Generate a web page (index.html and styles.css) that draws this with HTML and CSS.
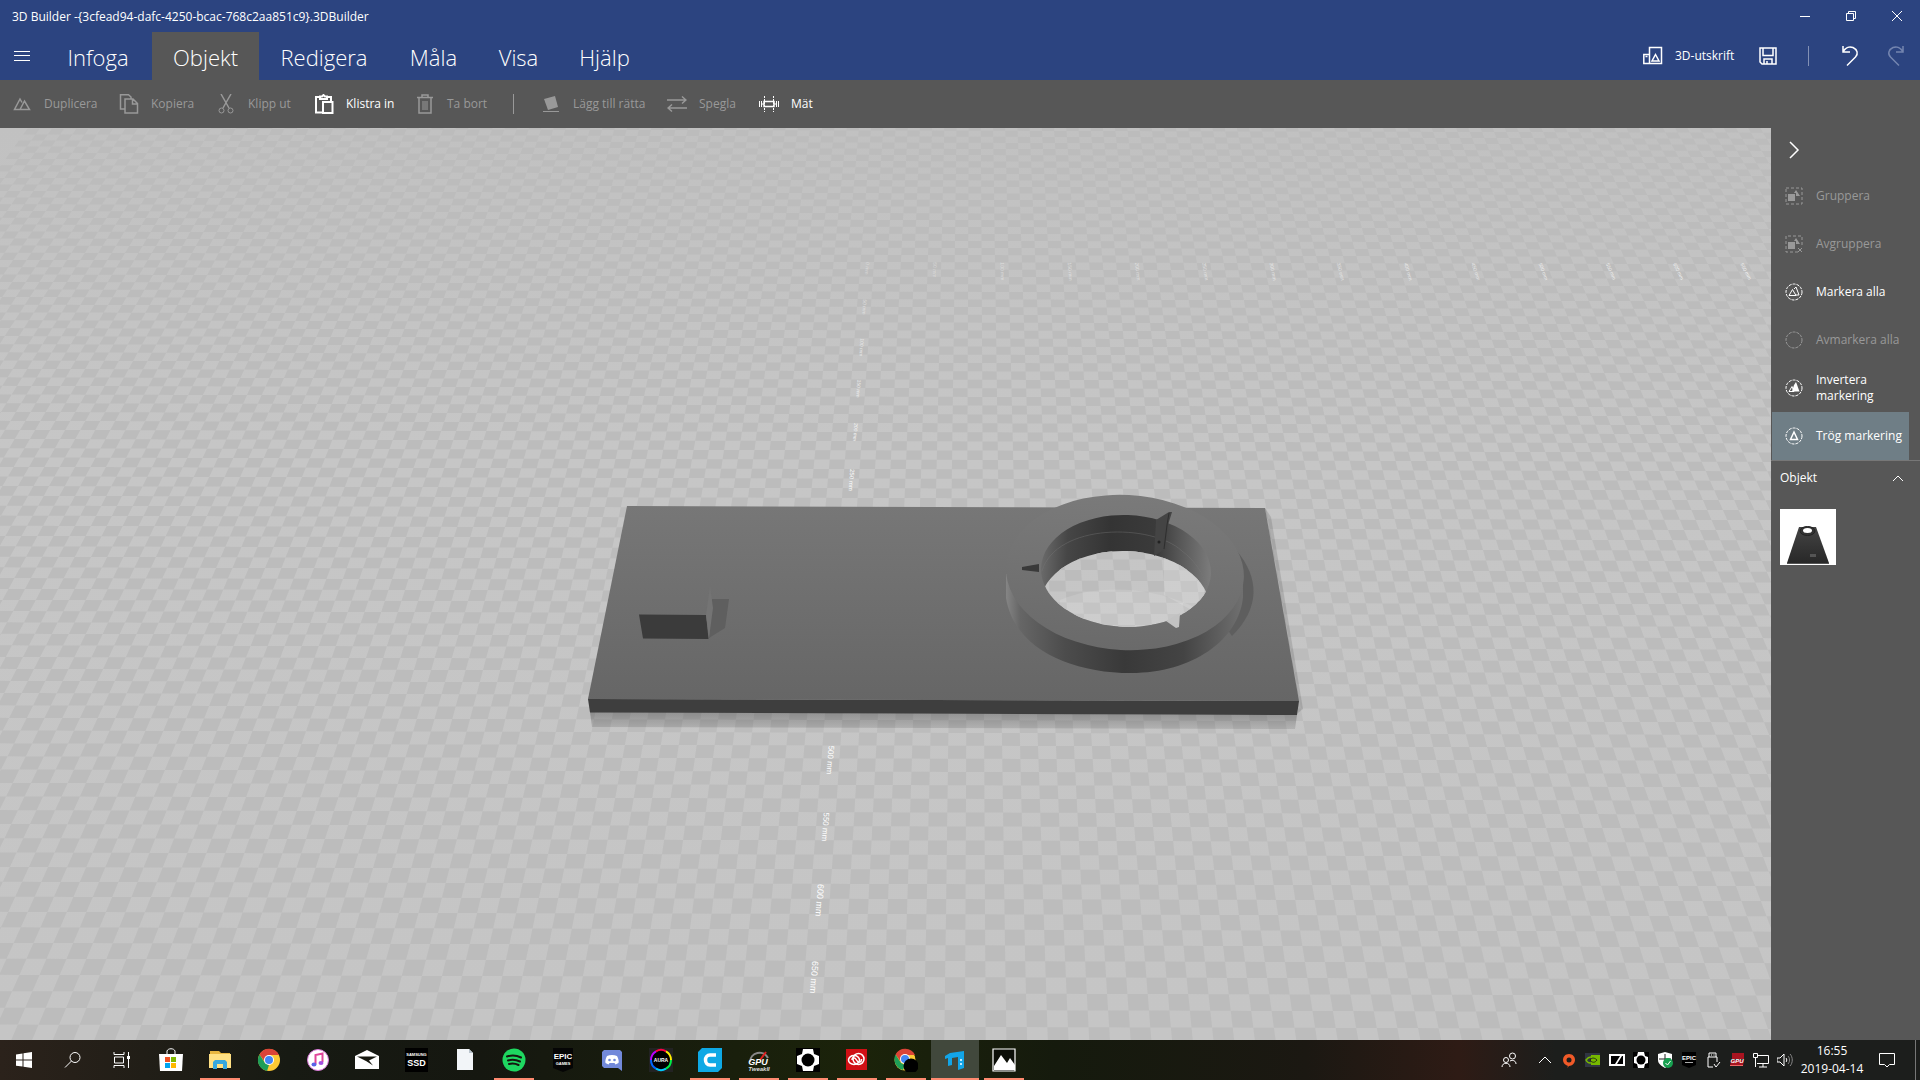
FILE: index.html
```html
<!DOCTYPE html>
<html lang="sv">
<head>
<meta charset="utf-8">
<title>3D Builder</title>
<link rel="stylesheet" href="styles.css">
</head>
<body>
<header class="titlebar">
  <span class="title">3D Builder -{3cfead94-dafc-4250-bcac-768c2aa851c9}.3DBuilder</span>
  <div class="window-controls">
    <button aria-label="Minimera"><svg width="10" height="10"><path d="M0 5.500h10"/></svg></button>
    <button aria-label="Återställ"><svg width="10" height="10"><path d="M.5 2.500h7v7h-7zM2.500 2.500v-2h7v7h-2"/></svg></button>
    <button aria-label="Stäng"><svg width="10" height="10"><path d="M0 0l10 10M10 0L0 10"/></svg></button>
  </div>
</header>

<nav class="menubar">
  <button class="burger" aria-label="Meny"><svg width="16" height="12"><path d="M0 1.500h16M0 5.500h16M0 10.500h16"/></svg></button>
  <div class="tabs">
    <button>Infoga</button>
    <button class="active">Objekt</button>
    <button>Redigera</button>
    <button>Måla</button>
    <button>Visa</button>
    <button>Hjälp</button>
  </div>
  <div class="quick">
    <button class="print"><svg width="20" height="20"><path class="mid" d="M6.500 1.500h12v16h-12zM6 8.500H.8v9H6M2.500 10.500h2" /><path class="mid" d="M12.500 8.500l3.500 6.500H9z"/></svg>3D-utskrift</button>
    <button aria-label="Spara"><svg width="20" height="20"><path class="mid" d="M2 2h16v16H4l-2-2zM5 2v7.500h10V2M6 18v-5h8v5M9 15v3"/></svg></button>
    <span class="rule"></span>
    <button aria-label="Ångra"><svg width="20" height="22"><path class="mid" d="M3 1v6h7M3 7C5 3 9 1 13 2.500c4.500 2 5.500 6.500 2.500 9.500L7 20.500"/></svg></button>
    <button aria-label="Gör om" disabled><svg width="20" height="22"><path class="mid" d="M17 1v6h-7M17 7C15 3 11 1 7 2.500c-4.500 2-5.500 6.500-2.500 9.500l8.500 8.500"/></svg></button>
  </div>
</nav>

<div class="toolbar" role="toolbar">
  <button disabled><svg width="20" height="20"><path class="mid" d="M8 15.500H2.500L8 5l2 3.500M8 15.500L12.500 7l5 8.500z"/></svg>Duplicera</button>
  <button disabled><svg width="20" height="20"><path class="mid" d="M6 15H1.500V.8h8L12 3v2M6 5h8l4.500 4.500V19H6zM13.500 5v5h5"/></svg>Kopiera</button>
  <button disabled><svg width="20" height="20"><path d="M5 0l8 14M15 0L7 14" class="mid"/><circle cx="5.500" cy="16.500" r="2.500"/><circle cx="14.500" cy="16.500" r="2.500"/></svg>Klipp ut</button>
  <button><svg width="20" height="20"><path class="bold" d="M8 18.500H2V3h3M14 3h3v4M6 5V2.500h2L9.500 1 11 2.500h2V5zM9 8h9.500v11H9z"/></svg>Klistra in</button>
  <button disabled><svg width="20" height="20"><path class="mid" d="M2 3.500h16M7 3V1h6v2M4 4v15h12V4"/><path d="M8 7v9M10 7v9M12 7v9"/></svg>Ta bort</button>
  <span class="rule"></span>
  <button disabled><svg width="20" height="20"><path class="fill" d="M3 5l11-3 3 11-10 3z"/><path d="M2 17.500h16"/></svg>Lägg till rätta</button>
  <button disabled><svg width="20" height="20"><path class="mid" d="M0 6h18M15 2.500L19 6l-4 3.500M20 14H2M5 10.500L1 14l4 3.500"/></svg>Spegla</button>
  <button><svg width="20" height="20"><path class="mid" d="M5 7.500h10v5H5z"/><path d="M5.500 2v16M14.500 2v16" stroke-dasharray="2 1"/><path d="M.5 7v6M2.500 7v6M17.500 7v6M19.500 7v6M2 10h3M15 10h3"/></svg>Mät</button>
</div>

<div class="workspace">
  <main class="stage">
    <svg class="scene" viewBox="0 128 1771 912" preserveAspectRatio="xMidYMid slice" role="img" aria-label="3D-vy">
      <defs>
        <linearGradient id="ground" x1="0" y1="0" x2="0" y2="1"><stop offset="0" stop-color="#c1c1c1"/><stop offset=".35" stop-color="#c6c6c6"/><stop offset="1" stop-color="#c5c5c5"/></linearGradient>
        <linearGradient id="plate" x1="0" y1="0" x2="0" y2="1"><stop offset="0" stop-color="#777"/><stop offset="1" stop-color="#666"/></linearGradient>
        <linearGradient id="rim" gradientUnits="userSpaceOnUse" x1="0" y1="495" x2="0" y2="650"><stop offset="0" stop-color="#7a7a7a"/><stop offset="1" stop-color="#6a6a6a"/></linearGradient>
        <linearGradient id="side"><stop offset="0" stop-color="#858585"/><stop offset=".06" stop-color="#666"/><stop offset=".25" stop-color="#4c4c4c"/><stop offset=".5" stop-color="#393939"/><stop offset=".75" stop-color="#444"/><stop offset="1" stop-color="#707070"/></linearGradient>
        <linearGradient id="wall"><stop offset="0" stop-color="#6a6a6a"/><stop offset=".15" stop-color="#464646"/><stop offset=".4" stop-color="#343434"/><stop offset=".68" stop-color="#3b3b3b"/><stop offset=".8" stop-color="#555"/><stop offset="1" stop-color="#7c7c7c"/></linearGradient>
        <linearGradient id="under" x1="0" y1="0" x2="0" y2="1"><stop offset="0" stop-opacity=".26"/><stop offset="1" stop-opacity=".1"/></linearGradient>
        <clipPath id="hole"><ellipse cx="1126" cy="571" rx="85" ry="56" transform="rotate(2 1126 571)"/></clipPath>
        <clipPath id="opening"><ellipse cx="1125" cy="607" rx="85" ry="56" transform="rotate(2 1125 607)"/></clipPath>
      </defs>
      <g id="floor"><rect y="128" width="1771" height="912" fill="url(#ground)"/><path id="tiles" fill="#bcbcbc"/></g>
      <g id="marks"></g>
      <path d="M590 712l707 3-2 14-703-2z" fill="url(#under)"/>
      <path d="M1265 508l6 9 32 192-5 4z" fill-opacity=".12"/>
      <path d="M627 506l638 2 34 193-711-2z" fill="url(#plate)"/>
      <path d="M588 699l711 2-2 14-707-2.500z" fill="#3e3e3e"/>
      <path d="M639 614.500l67 .5 2.500 24-65.500-.5z" fill="#3b3b3b"/>
      <path d="M712 599h17l-4 29-16 10z" fill="#5f5f5f"/>
      <path d="M710 586l3 22-4 30-3-23z" fill="#747474"/>
      <path d="M1236 550c24 28 24 58-4 86l-14-20z" fill="#5e5e5e"/>
      <path d="M1006 574v24C1014 648 1070 673 1131 673s108-33 112-76v-24z" fill="url(#side)"/>
      <ellipse cx="1125" cy="572.500" rx="119" ry="77.500" transform="rotate(3 1125 572)" fill="url(#rim)"/>
      <ellipse cx="1126" cy="571" rx="85" ry="56" transform="rotate(2 1126 571)" fill="url(#wall)"/>
      <g clip-path="url(#hole)"><path d="M1042 571c14-48 110-48 140-20 14 10 22 25 27 38" fill="none" stroke="#777" stroke-opacity=".4"/>
        <g clip-path="url(#opening)"><use href="#floor"/><path d="M1164 549v46l40 22V560z" fill="#fff" fill-opacity=".15"/><path d="M1060 600c40-18 100-12 140 10v30h-140z" fill="#fff" fill-opacity=".12"/></g></g>
      <path d="M1022 567l17-3v8l-17-2z" fill="#3a3a3a"/>
      <path d="M1156 520l13-8h3l-4 13-3 24-11 7z" fill="#444"/>
      <path d="M1169 513l-2 12-3 24" fill="none" stroke="#2e2e2e"/>
      <circle cx="1159" cy="542" r="1.500" fill="#222"/>
      <path d="M1166 621l14-8-1 14-3 1z" fill="#c2c2c2"/>
    </svg>
  </main>

  <aside class="panel">
    <button class="collapse" aria-label="Dölj panel"><svg width="12" height="18"><path class="mid" d="M2 1l8 8-8 8"/></svg></button>
    <button disabled><svg width="18" height="18"><path d="M1 1h16v16H1z" stroke-dasharray="3 2"/><path class="fill" d="M3 7h7v7H3zM11 3l4 6h-4V6H9z"/></svg>Gruppera</button>
    <button disabled><svg width="18" height="18"><path d="M13 17H1V1h16v11" stroke-dasharray="3 2"/><path class="fill" d="M3 7h7v7H3zM11 3l4 6h-4V6H9z"/><path d="M13 13l4 4M17 13l-4 4"/></svg>Avgruppera</button>
    <button><svg width="18" height="18"><circle cx="9" cy="9" r="8" stroke-dasharray="3 1"/><path d="M4 12.500l3.500-6 3.500 6zM9 6l2-2 3 8h-3"/></svg>Markera alla</button>
    <button disabled><svg width="18" height="18"><circle cx="9" cy="9" r="8" stroke-dasharray="3 1"/></svg>Avmarkera alla</button>
    <button><svg width="18" height="18"><circle cx="9" cy="9" r="8" stroke-dasharray="3 1"/><path d="M4 12.500l3-5 2 5z"/><path class="fill" d="M7 12.500L9 6l2-3 3.500 9.500z"/></svg>Invertera markering</button>
    <button class="selected"><svg width="18" height="18"><circle cx="9" cy="9" r="8" stroke-dasharray="3 1"/><path class="mid" d="M9 5l3.500 7.500h-7z"/></svg>Trög markering</button>
    <section class="objects">
      <h2>Objekt<svg width="12" height="8"><path d="M1 7l5-5 5 5"/></svg></h2>
      <button class="thumb" aria-label="Objekt 1"><svg width="56" height="56"><defs><linearGradient id="mini" x1="0" y1="0" x2="0" y2="1"><stop offset="0" stop-color="#444"/><stop offset="1" stop-color="#282828"/></linearGradient></defs><path fill="url(#mini)" stroke="none" d="M19 18h17l13 36H7z"/><path d="M7 54.500h42" stroke="#555"/><ellipse cx="27.500" cy="22" rx="7.500" ry="4.500" stroke="#222" fill="#333"/><ellipse cx="27.500" cy="21.500" rx="4.500" ry="2.500" fill="#fff" stroke="none"/><path d="M30 45h6v3h-6z" stroke="none" fill="#555"/></svg></button>
    </section>
  </aside>
</div>

<footer class="taskbar">
  <div class="apps">
    <button aria-label="Start"><svg width="24" height="24"><path class="w" d="M4 6.500l6.500-1v6H4zM11.500 5.300L20 4v7.500h-8.500zM4 12.500h6.500v6L4 17.700zM11.500 12.500H20V20l-8.500-1.200z"/></svg></button>
    <button aria-label="Sök"><svg width="24" height="24"><circle class="l" cx="14" cy="9.500" r="5"/><path class="l" d="M10.500 13L4 19.500"/></svg></button>
    <button aria-label="Aktivitetsvy"><svg width="24" height="24"><path class="l" d="M4 4v2.500h10V4M4 20v-2.500h10V20M4.500 9h9v6h-9zM18.500 4v16"/><path class="w" d="M17 8h3v3h-3z"/></svg></button>
    <button aria-label="Microsoft Store"><svg width="24" height="24"><path class="w" d="M0 6h24l-1 17H1z"/><path class="l" d="M8 7V3c1-3 7-3 8 0v4"/><path fill="#f05022" d="M6 9h5v5H6z"/><path fill="#7fba00" d="M12 9h5v5h-5z"/><path fill="#00a4ef" d="M6 15h5v5H6z"/><path fill="#ffb900" d="M12 15h5v5h-5z"/></svg></button>
    <button class="open" aria-label="Utforskaren"><svg width="24" height="24"><path fill="#e8b640" d="M2 3h9l2 2h9v4H2z"/><path fill="#ffe083" d="M1 6h22v14H1z"/><path fill="#35a8e0" d="M5 21v-7l2-2h10l2 2v7h-4v-5H9v5z"/></svg></button>
    <button aria-label="Chrome"><svg width="24" height="24"><circle cx="12" cy="12" r="11" fill="#fcc934"/><path fill="#db4437" d="M2.500 6.500A11 11 0 0 1 22 7H12l-4 7z"/><path fill="#1e9e58" d="M2.500 6.500L8 15l4 2-2 6A11 11 0 0 1 2.500 6.500z"/><circle cx="12" cy="12" r="5" fill="#fff"/><circle cx="12" cy="12" r="4" fill="#4285f4"/></svg></button>
    <button aria-label="iTunes"><svg width="24" height="24"><circle cx="12" cy="12" r="10.500" fill="#fff" stroke="#d977d8" stroke-width="1"/><path fill="none" stroke="#e0459a" stroke-width="2" d="M9.500 16V7l7-1.500V14"/><ellipse cx="8" cy="16.500" rx="2.500" ry="2" fill="#5a63e8"/><ellipse cx="15" cy="15" rx="2.500" ry="2" fill="#a24fe0"/></svg></button>
    <button aria-label="E-post"><svg width="24" height="24"><path class="w" d="M0 8l12-6 12 6v13H0z"/><path fill="#171810" d="M2 8.500h20l-8 4 4 5-7-4.500z"/></svg></button>
    <button aria-label="Samsung SSD"><svg width="24" height="24"><path d="M1 0h23v24H1z"/><text class="w" x="12.500" y="8" font-size="4" font-weight="700" text-anchor="middle">SAMSUNG</text><text class="w" x="12.500" y="18" font-size="9" font-weight="700" text-anchor="middle">SSD</text></svg></button>
    <button aria-label="Dokument"><svg width="24" height="24"><path fill="#f2f5f8" d="M4 1h12l4 4v17H4z"/><path fill="#b9c3cc" d="M16 1v4h4z"/></svg></button>
    <button class="open" aria-label="Spotify"><svg width="24" height="24"><circle cx="12" cy="12" r="11.500" fill="#1ed760"/><path fill="none" stroke="#151710" stroke-width="2" stroke-linecap="round" d="M5 8.500c5-1.500 10-1 14 1M6 12.500c4-1.200 8-.8 12 1M7 16c3.500-.8 6.500-.5 9.500 1"/></svg></button>
    <button aria-label="Epic Games"><svg width="24" height="24"><path fill="#050505" d="M2 0h20v20l-10 4-10-4z"/><text class="w" x="12" y="11" font-size="8" font-weight="700" text-anchor="middle">EPIC</text><text class="w" x="12" y="17" font-size="4" font-weight="700" text-anchor="middle">GAMES</text></svg></button>
    <button aria-label="Discord"><svg width="24" height="24"><path fill="#7289da" d="M4 2h16l2 2v19l-4-3H4l-2-2V4z"/><path class="w" d="M7 8c3-1.500 7-1.500 10 0 1.500 3 2 5 1.500 7l-3 1.500-1-1.500h-5l-1 1.500-3-1.500C5 13 5.500 11 7 8z"/><circle cx="9.500" cy="12" r="1.300" fill="#7289da"/><circle cx="14.500" cy="12" r="1.300" fill="#7289da"/></svg></button>
    <button aria-label="Aura"><svg width="24" height="24"><path fill="#222" d="M0 0h24v24H0z"/><circle cx="12" cy="12" r="10" fill="#000"/><g fill="none" stroke-width="2"><path stroke="#b0f" d="M2 12A10 10 0 0 1 7 3.300"/><path stroke="#f04" d="M7 3.300a10 10 0 0 1 10 0"/><path stroke="#fe0" d="M17 3.300A10 10 0 0 1 22 12"/><path stroke="#06f" d="M2 12a10 10 0 0 0 5 8.700"/><path stroke="#0cf" d="M17 20.700A10 10 0 0 1 7 20.700"/><path stroke="#0e4" d="M22 12a10 10 0 0 1-5 8.700"/></g><text class="w" x="12" y="14" font-size="5" font-weight="700" text-anchor="middle">AURA</text></svg></button>
    <button class="open" aria-label="Cura"><svg width="24" height="24"><path fill="#0ea9e5" d="M4 0h20v20l-4 4H0V4z"/><path fill="none" stroke="#fff" stroke-width="3.500" d="M18 7h-6c-6 0-6 10 0 10h6"/></svg></button>
    <button class="open" aria-label="GPU Tweak II"><svg width="24" height="24"><path fill="none" stroke="#888" stroke-width="2" d="M3 14A9.500 9.500 0 0 1 21 10"/><path fill="none" stroke="#e02020" stroke-width="2" d="M13 12l6-8"/><text class="w" x="11" y="17" font-size="9" font-weight="700" font-style="italic" text-anchor="middle">GPU</text><text fill="#ddd" x="12" y="23" font-size="6" font-weight="700" font-style="italic" text-anchor="middle">TweakII</text></svg></button>
    <button class="open" aria-label="Sköld"><svg width="24" height="24"><path d="M0 0h24v24H0z"/><path class="w" d="M7 1h10l1 5 5 2v8l-5 2-1 5H7l-1-5-5-2V8l5-2z"/><circle cx="12" cy="12" r="6.500"/></svg></button>
    <button class="open" aria-label="Creative Cloud"><svg width="24" height="24"><path fill="#d01015" d="M1 1h21v21H1z"/><g fill="none" stroke="#fff" stroke-width="1.500"><ellipse cx="9" cy="12" rx="5.500" ry="4.500"/><circle cx="13.500" cy="11" r="5.500"/><path d="M7 12c0-3 3-3 4.500 0s5 3 5-1"/></g></svg></button>
    <button class="open" aria-label="Chrome"><svg width="24" height="24"><circle cx="11" cy="12" r="10.500" fill="#fcc934"/><path fill="#db4437" d="M1.500 6.500A11 11 0 0 1 21 7H11l-4 7z"/><path fill="#1e9e58" d="M1.500 6.500L7 15l4 2-2 5A11 11 0 0 1 1.500 6.500z"/><circle cx="11" cy="11" r="5" fill="#fff"/><circle cx="11" cy="11" r="4" fill="#4285f4"/><circle cx="17" cy="18" r="7.500"/></svg></button>
    <button class="open current" aria-label="3D Builder"><svg width="24" height="24"><path fill="#12a5e8" d="M2 8l5-3 14-2v17l-6 2V9l-6 1v7l-4 1v-8l-3 1z"/><path fill="#bfe9ff" d="M17 11h2v2h-2zM17 15h2v2h-2z"/></svg></button>
    <button class="open" aria-label="Foton"><svg width="24" height="24"><path fill="#0c0f08" stroke="#fff" stroke-width="1.200" d="M1 1h22v22H1z"/><path class="w" d="M2 18l7-11 6 8 3-5 5 7v5H2z"/></svg></button>
  </div>

  <div class="tray">
    <button class="people" aria-label="Personer"><svg width="16" height="16"><circle class="l" cx="5" cy="8" r="2.500"/><circle class="l" cx="11.500" cy="4" r="3"/><path class="l" d="M1 15c0-5 8-5 8 0M9 9c3-1.500 6 0 6 3"/></svg></button>
    <button aria-label="Visa dolda ikoner"><svg width="16" height="16"><path class="l" d="M2 11l6-6 6 6"/></svg></button>
    <button aria-label="Origin"><svg width="16" height="16"><path fill="#f05a28" d="M9 0L8 2c4 0 6 3 6 6s-3 6-6 6l-2 2 1-2c-3-1-5-3-5-6s2-6 6-6z"/><circle cx="8" cy="8" r="2.500" fill="#1c1d1c"/></svg></button>
    <button aria-label="Nvidia"><svg width="16" height="16"><path fill="#303642" d="M0 1h15v14H0z"/><path fill="#76b900" d="M6 3h9v10H6z"/><path fill="none" stroke="#76b900" stroke-width="1.500" d="M1 8c3-4 7-4 9 0-3 4-7 4-9 0z"/><path fill="none" stroke="#263010" d="M5 8c2-3 5-2 7 0-2 3-5 3-7 0z"/></svg></button>
    <button aria-label="Sennheiser"><svg width="16" height="16"><path class="w" d="M0 2h16v12H0z"/><path d="M2 4h9l-5 8H2zM14 12H8l5-8h1z"/></svg></button>
    <button aria-label="Sköld"><svg width="16" height="16"><path d="M0 0h16v16H0z"/><path class="w" d="M5 0h6l1 4 3 1v6l-3 1-1 4H5l-1-4-3-1V5l3-1z"/><circle cx="8" cy="8" r="4.500"/></svg></button>
    <button aria-label="Windows-säkerhet"><svg width="16" height="16"><path class="w" d="M8 0l7 2v6c0 4-4 6-7 8-3-2-7-4-7-8V2z"/><path d="M8 2v12M2 7h12" stroke="#222"/><circle cx="11" cy="11" r="5" fill="#17a050"/><path class="l" d="M8.500 11l2 2 3-4"/></svg></button>
    <button aria-label="Epic Games"><svg width="16" height="16"><path fill="#000" d="M1 0h14v13l-7 3-7-3z"/><text class="w" x="8" y="8" font-size="6" font-weight="700" text-anchor="middle">EPIC</text><path stroke="#aaa" d="M4 10.500h8"/></svg></button>
    <button aria-label="USB"><svg width="16" height="16"><path class="l" d="M4 5V1h7v4M3 15V5h9v5M3 15h5M9 12l2 3 4-5M6 3h1M8.500 3h1"/></svg></button>
    <button aria-label="GPU Tweak II"><svg width="16" height="16"><path fill="#a81420" d="M3 1h12v6H3zM2 8h13l-1 6H1z"/><text class="w" x="8" y="11" font-size="6" font-weight="700" font-style="italic" text-anchor="middle">GPU</text><path stroke="#e66" d="M1 13.500h13"/></svg></button>
    <button aria-label="Nätverk"><svg width="16" height="16"><path class="l" d="M4 3.500h11.500v8H4M10 12v3M6 15h8M.5 1.500h4v4h-4zM2.500 6v9"/></svg></button>
    <button aria-label="Volym"><svg width="16" height="16"><path class="l" d="M0 6h3l4-4v12l-4-4H0zM9 6c1 1 1 3 0 4"/><path class="l faint" d="M11 4c2 2 2 6 0 8M13 2c3 3 3 9 0 12"/></svg></button>
    <time class="clock" datetime="2019-04-14T16:55">16:55<br>2019-04-14</time>
    <button class="notify" aria-label="Åtgärdscenter"><svg width="16" height="16"><path class="l" d="M.5 1.500h15v11h-5L8 15l-2.500-2.500h-5z"/></svg></button>
    <span class="desktop"></span>
  </div>
</footer>
<script src="floor.js"></script>
</body>
</html>
```
FILE: styles.css
```css
* { box-sizing: border-box; }
body {
  margin: 0;
  height: 100vh;
  display: flex;
  flex-direction: column;
  overflow: hidden;
  background: #575757;
  color: #fff;
  font: 12px/16px "Open Sans", "Noto Sans", sans-serif;
}
button {
  display: flex;
  align-items: center;
  justify-content: center;
  padding: 0;
  border: 0;
  background: none;
  color: inherit;
  font: inherit;
  text-align: left;
}
svg { flex: none; display: block; }
button svg, h2 svg { fill: none; stroke: currentColor; stroke-width: 1; }
.mid { stroke-width: 1.5; }
.bold { stroke-width: 2; }
.fill { fill: currentColor; stroke: none; }
button:disabled { color: #999; }
.rule { width: 1px; height: 20px; background: #999; }

.titlebar {
  display: flex;
  flex: none;
  justify-content: space-between;
  height: 32px;
  padding-left: 12px;
  background: #2c4480;
  line-height: 34px;
}
.window-controls { display: grid; grid-template-columns: repeat(3, 46px); }

.menubar { display: flex; flex: none; height: 48px; background: #2c4480; }
.burger { width: 44px; }
.tabs {
  display: grid;
  grid-template-columns: 108px 107px 130px 89px 81px 91px;
  font: 300 22px/32px "Open Sans", sans-serif;
}
.tabs button { padding-top: 2px; }
.tabs .active { background: #575757; }
.quick {
  display: grid;
  grid-template-columns: 105px 40px 40px 43px 49px;
  align-items: center;
  margin-left: auto;
}
.quick .print { gap: 12px; justify-content: flex-start; }
.quick .rule { justify-self: center; background: #8391b5; }
.quick button:disabled { color: #7485af; }

.toolbar {
  display: grid;
  flex: none;
  grid-template-columns: 107px 97px 98px 101px 98px 28px 126px 92px auto;
  align-items: center;
  justify-content: start;
  height: 48px;
  padding-left: 12px;
}
.toolbar button { gap: 12px; justify-content: flex-start; white-space: nowrap; }

.workspace { display: flex; flex: 1; min-height: 0; }
.stage { flex: 1; min-width: 0; background: #c4c4c4; }
.scene { width: 100%; height: 100%; }
.mark { fill: #fff; font-family: "Liberation Sans", sans-serif; }

.panel { flex: none; width: 149px; }
.panel > button {
  justify-content: flex-start;
  gap: 13px;
  width: 138px;
  height: 48px;
  padding-left: 14px;
}
.panel > .collapse { height: 44px; padding-left: 17px; }
.panel > .selected { margin-left: 1px; width: 137px; padding-left: 13px; background: #6f7e86; }
.objects { border-top: 1px solid #777; padding: 9px 9px 0; }
.objects h2 {
  display: flex;
  align-items: center;
  justify-content: space-between;
  margin: 0 0 23px;
  padding-right: 7px;
  font-size: 12px;
  font-weight: 400;
}
.thumb { width: 56px; height: 56px; background: #fff; }

.taskbar {
  display: flex;
  flex: none;
  justify-content: space-between;
  height: 40px;
  background: linear-gradient(90deg, #2b221b, #171a13 15%, #151710 25%, #1b230a 45%, #151a0d 55%, #1b1812 68%, #2e1b15 76%, #1c1e1c 81%, #1c1e1c);
}
.taskbar svg { stroke: none; fill: #000; }
.taskbar .w { fill: #fff; }
.taskbar .l { fill: none; stroke: #fff; stroke-width: 1; }
.taskbar .faint { stroke: #888; }
.taskbar text { font-family: "Liberation Sans", sans-serif; }
.apps { display: grid; grid-template-columns: repeat(21, 49px); }
.apps button { border: solid transparent; border-width: 2px 0; margin: 0 5px 0 4px; }
.apps .open { border-bottom-color: #ff8a70; }
.apps .current { margin: 0 1px 0 0; background: #41483c; }
.tray { display: flex; }
.tray button { width: 24px; }
.tray .people { width: 48px; }
.clock { width: 70px; padding-top: 2px; line-height: 18px; text-align: center; }
.tray .notify { width: 40px; }
.desktop { width: 1px; margin: 0 4px 0 8px; background: #777; }
```
FILE: floor.js
```javascript
// Perspective grid: 10 mm tiles, horizon far above the view.
const HORIZON = -1178.7, VANISH_X = 974, ORIGIN_Y = 262;
const rowY = i => HORIZON + 286705 / (199 - i);
const project = (k, i) => {
  const y = rowY(i);
  const x = VANISH_X + (y - HORIZON) / (ORIGIN_Y - HORIZON) * (-19.3 + 13.45 * k);
  return [x, y + 0.0025 * (x - 866)];
};

let d = "";
for (let i = -23; i < 72; i++) {
  for (let k = -76; k < 70; k++) {
    if ((i + k) & 1) continue;
    const corners = [project(k, i), project(k + 1, i), project(k + 1, i + 1), project(k, i + 1)];
    d += "M" + corners.map(p => p.map(v => v.toFixed(1)).join(" ")).join("L") + "z";
  }
}
document.getElementById("tiles").setAttribute("d", d);

// Ruler labels along both axes.
const marks = document.getElementById("marks");
function mark(mm, k, i, size, opacity) {
  const [x, y] = project(k, i);
  const lean = Math.atan2(VANISH_X - x, y - HORIZON) * 180 / Math.PI;
  const t = document.createElementNS("http://www.w3.org/2000/svg", "text");
  t.setAttribute("class", "mark");
  t.setAttribute("font-size", size);
  t.setAttribute("fill-opacity", opacity);
  t.setAttribute("transform", `translate(${x - size * 0.8} ${y}) rotate(${90 + lean})`);
  t.textContent = mm + " mm";
  marks.append(t);
}
const sizes = { 0: 5, 50: 5, 100: 5, 150: 5, 200: 5, 250: 6, 500: 8, 550: 8, 600: 9, 650: 9 };
for (const mm in sizes) mark(mm, -6.3, mm / 10, sizes[mm], Math.min(1, 0.4 + mm / 400));
for (let mm = 50; mm <= 650; mm += 50) mark(mm, -6.3 + mm / 10, 0, 5, 0.4 + mm / 1500);
```
